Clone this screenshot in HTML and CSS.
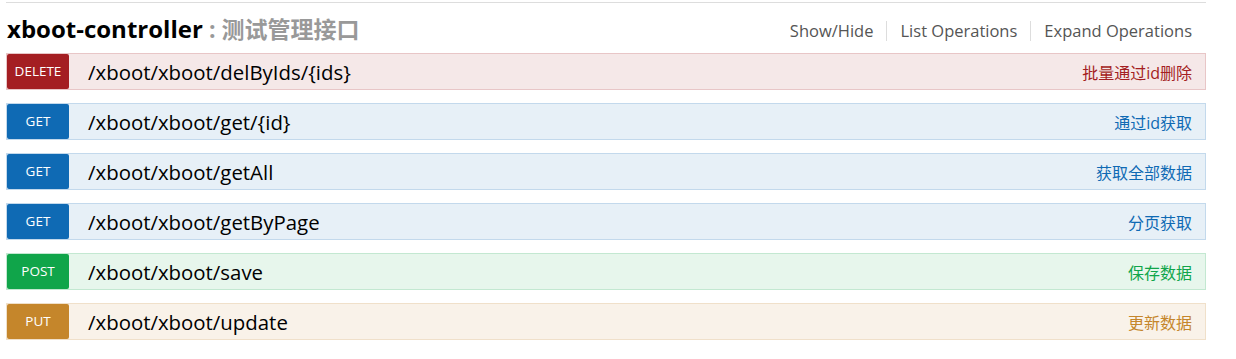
FILE: index.html
```html
<!DOCTYPE html>
<html lang="en">
  <head>
    <meta charset="UTF-8" />
    <title>xboot-controller</title>
    <link rel="stylesheet" href="styles.css">
  </head>
  <body>
    <div class="resource">
      <div class="heading">
        <h2 class="title">xboot-controller <span class="desc">: 测试管理接口</span></h2>
        <ul class="options">
          <li><a href="#">Show/Hide</a></li>
          <li><a href="#">List Operations</a></li>
          <li><a href="#">Expand Operations</a></li>
        </ul>
      </div>
      <ul class="endpoints">
        <li class="op delete">
          <span class="method">DELETE</span>
          <span class="path">/xboot/xboot/delByIds/{ids}</span>
          <span class="summary">批量通过id删除</span>
        </li>
        <li class="op get">
          <span class="method">GET</span>
          <span class="path">/xboot/xboot/get/{id}</span>
          <span class="summary">通过id获取</span>
        </li>
        <li class="op get">
          <span class="method">GET</span>
          <span class="path">/xboot/xboot/getAll</span>
          <span class="summary">获取全部数据</span>
        </li>
        <li class="op get">
          <span class="method">GET</span>
          <span class="path">/xboot/xboot/getByPage</span>
          <span class="summary">分页获取</span>
        </li>
        <li class="op post">
          <span class="method">POST</span>
          <span class="path">/xboot/xboot/save</span>
          <span class="summary">保存数据</span>
        </li>
        <li class="op put">
          <span class="method">PUT</span>
          <span class="path">/xboot/xboot/update</span>
          <span class="summary">更新数据</span>
        </li>
      </ul>
    </div>
  </body>
</html>
```

FILE: styles.css
```css
body {
  margin: 0;
  background: #fff;
  font-family: "Open Sans", "Noto Sans CJK SC", sans-serif;
}

.resource {
  width: 1200px;
  margin: 2px 0 0 6px;
  border-top: 1px solid #ddd;
}

.heading {
  display: flex;
  justify-content: space-between;
  align-items: center;
  height: 50px;
}

.title {
  margin: 0 0 0 1px;
  font-size: 24px;
  font-weight: bold;
  color: #000;
}

.title .desc {
  font-size: 23px;
  color: #999;
}

.options {
  display: flex;
  list-style: none;
  margin: 5px 14px 0 0;
  padding: 0;
}

.options li {
  padding: 0 13px;
  border-left: 1px solid #ddd;
  line-height: 20px;
}

.options li:first-child {
  border-left: none;
}

.options li:last-child {
  padding-right: 0;
}

.options a {
  color: #555;
  font-size: 16.5px;
  text-decoration: none;
}

.endpoints {
  list-style: none;
  margin: 0;
  padding: 0;
}

.op {
  display: flex;
  align-items: center;
  height: 35px;
  margin-bottom: 13px;
  border: 1px solid;
}

.method {
  width: 62px;
  height: 35px;
  line-height: 35px;
  text-align: center;
  color: #fff;
  font-size: 13.5px;
  border-radius: 2px;
}

.path {
  flex: 1;
  margin-left: 19px;
  font-size: 20.4px;
  color: #000;
}

.summary {
  margin-right: 13px;
  font-size: 16px;
}

.delete { background: #f5e8e8; border-color: #e8c6c7; }
.delete .method { background: #a41e22; }
.delete .summary { color: #a41e22; }

.get { background: #e7f0f7; border-color: #c3d9ec; }
.get .method { background: #0f6ab4; }
.get .summary { color: #0f6ab4; }

.post { background: #e7f6ec; border-color: #c3e8d1; }
.post .method { background: #10a54a; }
.post .summary { color: #10a54a; }

.put { background: #f9f2e9; border-color: #f0e0ca; }
.put .method { background: #c5862b; }
.put .summary { color: #c5862b; }
```
